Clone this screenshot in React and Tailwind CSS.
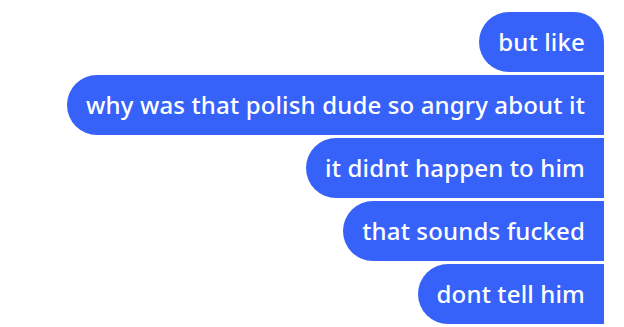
const messages = [
  "but like",
  "why was that polish dude so angry about it",
  "it didnt happen to him",
  "that sounds fucked",
  "dont tell him",
];

export default function App() {
  return (
    <div className="w-[624px] h-[327px] bg-white overflow-hidden">
      <div className="flex flex-col items-end gap-[3px] pt-[12px] pr-[20px]">
        {messages.map((text, i) => (
          <div
            key={i}
            className={`flex h-[60px] items-center rounded-l-[30px] bg-[#3662fa] px-[19px] text-[24px] font-medium tracking-[0.15px] text-white ${
              i === 0 ? "rounded-tr-[30px]" : ""
            }`}
            style={{ fontFamily: '"Noto Sans", sans-serif' }}
          >
            {text}
          </div>
        ))}
      </div>
    </div>
  );
}
